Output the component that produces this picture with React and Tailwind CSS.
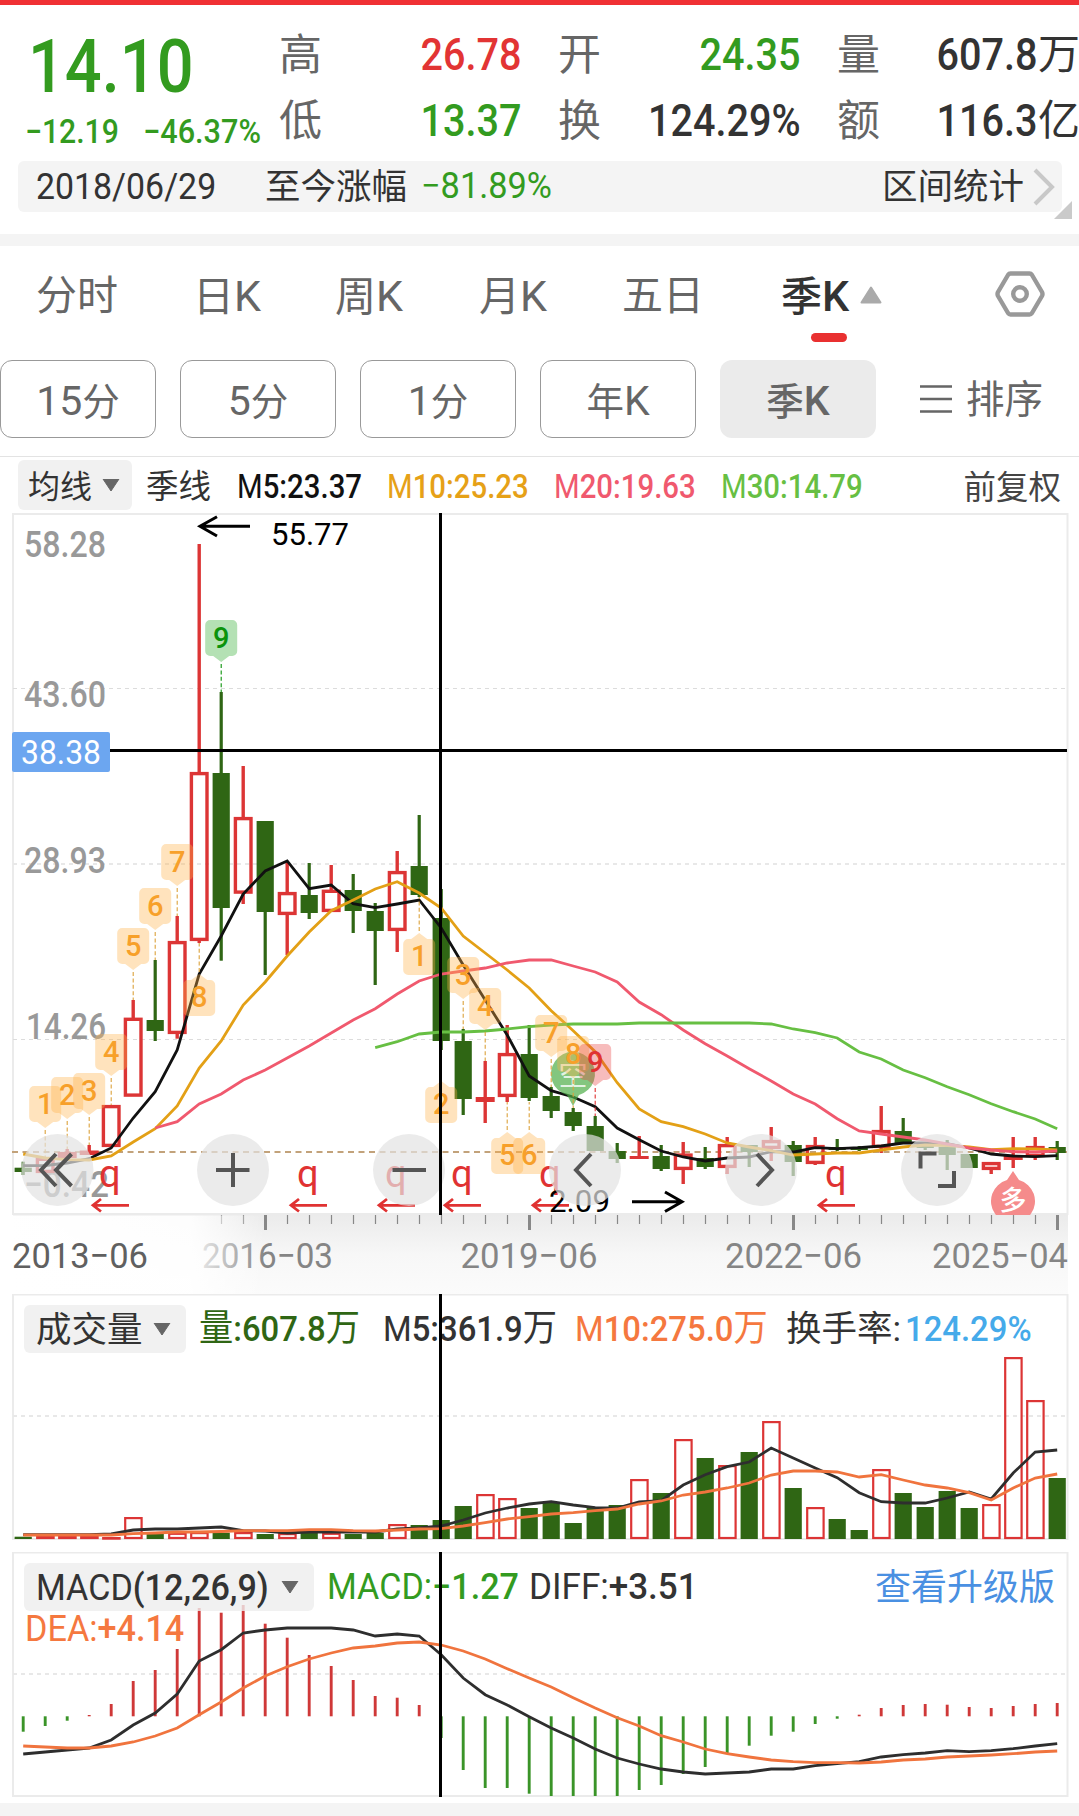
import React from 'react';

const RED = '#dc3535';
const GREEN = '#2f6614';
const STEP = 22;
const px = (i) => 23.2 + i * STEP;

// [direction, body top, body bottom, high, low]
const candles = [
    ['g', 1167.7, 1172, 1161.7, 1175],
    ['r', 1157.7, 1173, 1157.7, 1173],
    ['r', 1152, 1158, 1149, 1158],
    ['r', 1150.5, 1155, 1145, 1155],
    ['r', 1105, 1147, 1105, 1147],
    ['r', 1017.7, 1096.7, 1000, 1096.7],
    ['g', 1020, 1031, 960, 1041],
    ['r', 941, 1034, 916, 1038.7],
    ['r', 772, 941, 544, 943],
    ['g', 773, 908, 692, 960.7],
    ['r', 817, 893.7, 766, 904],
    ['g', 821, 912, 821, 975],
    ['r', 892, 915, 861.7, 955],
    ['g', 895, 913, 863, 919],
    ['r', 889.7, 912, 865, 912],
    ['g', 890, 911, 874, 933],
    ['g', 911, 931, 903, 985],
    ['r', 871, 931, 851, 952],
    ['g', 866, 895, 815, 897],
    ['g', 918, 1041, 889, 1050],
    ['g', 1041, 1099, 1029, 1115],
    ['r', 1097, 1102, 1061, 1123],
    ['r', 1053, 1097, 1025, 1102],
    ['g', 1054, 1098, 1025, 1101],
    ['g', 1096, 1111, 1087, 1118],
    ['g', 1112, 1126, 1108, 1131],
    ['g', 1126, 1151, 1116, 1151],
    ['g', 1151, 1159, 1143, 1163],
    ['r', 1156, 1159, 1136, 1159],
    ['g', 1156, 1169, 1145, 1171],
    ['r', 1153.5, 1170, 1142, 1184],
    ['g', 1158, 1167, 1147, 1169],
    ['r', 1144, 1168, 1137, 1174],
    ['g', 1145, 1152, 1145, 1167],
    ['r', 1140, 1149, 1127, 1161],
    ['g', 1145, 1162, 1141, 1176],
    ['r', 1145, 1164, 1137, 1165],
    ['g', 1147, 1150, 1139, 1151],
    ['g', 1147, 1150, 1146, 1151],
    ['r', 1130, 1148, 1106, 1153],
    ['g', 1131, 1144, 1118, 1144],
    ['g', 1144, 1148, 1144, 1150],
    ['g', 1147, 1155, 1140, 1170],
    ['g', 1154, 1168, 1154, 1168],
    ['r', 1162, 1170, 1162, 1174],
    ['r', 1155, 1160, 1137, 1168],
    ['r', 1146, 1157, 1137, 1160],
    ['g', 1147, 1153, 1141, 1160],
];

const ma5 = [1165.7, 1165.5, 1163, 1158.7, 1148, 1118, 1091.7, 1050, 974, 936, 894, 871, 861, 888.7, 885, 903.7, 907.7, 904, 900, 928, 965, 1000, 1035, 1076, 1090.7, 1097, 1106.7, 1128, 1139.7, 1151, 1157, 1161, 1158, 1157, 1151.7, 1152, 1147.7, 1148.7, 1147.7, 1146, 1143, 1143, 1143.7, 1148, 1154, 1156, 1156.7, 1155.7];
const ma10 = [1154, 1158, 1159.7, 1160, 1156, 1142, 1128.7, 1106, 1068, 1041, 1005, 982, 956, 932, 910.7, 900, 889, 881.7, 893, 908, 936, 953, 970, 988, 1010.7, 1030.7, 1051.7, 1082.7, 1109, 1121.7, 1126.7, 1134, 1143, 1147, 1150.7, 1155, 1154, 1153, 1153, 1150, 1147, 1145, 1145.7, 1147, 1149.7, 1148.7, 1149, 1150];
const ma20 = [1128, 1121.7, 1104, 1094, 1080, 1070, 1058, 1046, 1033, 1020, 1008.7, 994, 981, 974, 971, 968, 963, 960, 960, 966, 972, 982, 1002, 1014.7, 1030, 1043.7, 1056, 1068.7, 1081, 1094, 1104, 1118.7, 1131, 1134, 1137, 1140, 1144, 1148, 1150, 1151.7, 1152, 1151];
const ma30 = [1047.7, 1041.7, 1034, 1032, 1032, 1031, 1029, 1026.7, 1025, 1024, 1024, 1024, 1023, 1023, 1023, 1023, 1023, 1023, 1024, 1029, 1032.7, 1038, 1052, 1059, 1070, 1077.7, 1086.7, 1094.7, 1103.7, 1111.7, 1119, 1128.7];

const volumeTops = [1536.7, 1536, 1536, 1536, 1537, 1517, 1534, 1532.7, 1532, 1532.7, 1532, 1534, 1533, 1533, 1532.7, 1534, 1533, 1524, 1525, 1520, 1506, 1494, 1498, 1508, 1503, 1523, 1508, 1505, 1479, 1493, 1439, 1458, 1465, 1452, 1421, 1488, 1507, 1519, 1530, 1469, 1493, 1507, 1491, 1508, 1504, 1357, 1400, 1478];
const volMa5 = [1534.7, 1534.7, 1534.7, 1534.7, 1534, 1530, 1529, 1529, 1528, 1527, 1530.7, 1531, 1533, 1532, 1532, 1532, 1532, 1529, 1528, 1526, 1520, 1513, 1508, 1504, 1501.7, 1505, 1507.7, 1508, 1502, 1500.7, 1485, 1474.7, 1466.7, 1462, 1448, 1458, 1468, 1477.7, 1492.7, 1501.7, 1503, 1503, 1498, 1492, 1499, 1473, 1452, 1450];
const volMa10 = [1535, 1535, 1535, 1535, 1535, 1533.7, 1533, 1532, 1532, 1531.5, 1530.7, 1530.7, 1530.7, 1529.7, 1529.7, 1530.7, 1531, 1530, 1529, 1528.7, 1526, 1522.7, 1519, 1516.7, 1514, 1512.7, 1510.7, 1509, 1504, 1501, 1495, 1492, 1488, 1483, 1475, 1471, 1471, 1472, 1477, 1474.7, 1480, 1485, 1488, 1492.7, 1500, 1488, 1478, 1474];

const MACD_ZERO = 1716.3;
const macd = [1731.7, 1726, 1720.7, 1715, 1704, 1681, 1670, 1649, 1608, 1612.7, 1605, 1623.7, 1637.7, 1655, 1666, 1680, 1696, 1697.7, 1705, 1738, 1770, 1788, 1788, 1793.7, 1796, 1796, 1796, 1796, 1790, 1785, 1774, 1767, 1753, 1745.7, 1735.7, 1731.7, 1724, 1718.7, 1714.7, 1708, 1705, 1704, 1704.7, 1707, 1708, 1706, 1704, 1703];
const diff = [1754, 1752, 1750, 1748, 1740, 1725, 1713, 1694, 1661, 1649.7, 1633, 1630, 1628, 1628, 1628, 1630, 1636, 1634, 1636, 1654.7, 1678, 1694.7, 1705, 1716.7, 1728, 1738, 1749, 1758, 1764, 1769, 1772, 1774, 1773, 1772, 1769, 1769, 1765.7, 1763.7, 1761.7, 1757, 1754.7, 1753, 1750.7, 1751.7, 1750.7, 1748.7, 1746, 1743.7];
const dea = [1746, 1747, 1748, 1748, 1746, 1742, 1736, 1728, 1714.7, 1702, 1688, 1676, 1666.7, 1659, 1653, 1648, 1646, 1643, 1642, 1645, 1651, 1659, 1668.7, 1678, 1687, 1697.7, 1708, 1717.7, 1726, 1735.7, 1742, 1749, 1753.7, 1757, 1760, 1761.7, 1762.7, 1762.7, 1763, 1762, 1760, 1759, 1757, 1756, 1755, 1753.7, 1752, 1751];

// Countdown markers: candle index, label, pointer tip y, far end of the dashed line
const marks = [
    { i: 1, n: '1', tip: 1128, end: 1157, dir: 'down' },
    { i: 2, n: '2', tip: 1119, end: 1149, dir: 'down' },
    { i: 3, n: '3', tip: 1115, end: 1145, dir: 'down' },
    { i: 4, n: '4', tip: 1076, end: 1105, dir: 'down' },
    { i: 5, n: '5', tip: 970, end: 1000, dir: 'down' },
    { i: 6, n: '6', tip: 930, end: 960, dir: 'down' },
    { i: 7, n: '7', tip: 886, end: 916, dir: 'down' },
    { i: 8, n: '8', tip: 974, end: 943, dir: 'up' },
    { i: 9, n: '9', tip: 662, end: 692, dir: 'down', fill: '#b4e1b4', color: '#0b930b' },
    { i: 18, n: '1', tip: 933, end: 897, dir: 'up' },
    { i: 19, n: '2', tip: 1081, end: 1050, dir: 'up' },
    { i: 20, n: '3', tip: 999, end: 1029, dir: 'down' },
    { i: 21, n: '4', tip: 1030, end: 1061, dir: 'down' },
    { i: 22, n: '5', tip: 1132, end: 1102, dir: 'up' },
    { i: 23, n: '6', tip: 1132, end: 1102, dir: 'up' },
    { i: 24, n: '7', tip: 1057, end: 1087, dir: 'down' },
    { i: 25, n: '8', tip: 1078, end: 1108, dir: 'down' },
    { i: 26, n: '9', tip: 1086, end: 1116, dir: 'down', fill: 'rgba(232,60,60,0.34)', color: '#e03232' },
];

const Line = ({ data, start = 0, color }) => (
    <polyline
        points={data.map((y, k) => `${px(k + start)},${y}`).join(' ')}
        fill="none"
        stroke={color}
        strokeWidth="2.8"
    />
);

// SVG text squeezed to a fixed width
const T = ({ x, y, w, size, fill, weight = 400, children }) => (
    <text x={x} y={y} textLength={w} lengthAdjust="spacingAndGlyphs" fontSize={size} fill={fill} fontWeight={weight}>
        {children}
    </text>
);

const Candle = ({ i, d }) => {
    const [dir, top, bottom, high, low] = d;
    const x = px(i);
    if (dir === 'g') {
        return (
            <g fill={GREEN}>
                <rect x={x - 1.6} y={high} width="3.2" height={low - high} />
                <rect x={x - 8.6} y={top} width="17.2" height={bottom - top} />
            </g>
        );
    }
    return (
        <g stroke={RED} strokeWidth="3.4" fill="none">
            {high < top && <line x1={x} x2={x} y1={high} y2={top + 1} />}
            {low > bottom && <line x1={x} x2={x} y1={bottom - 1} y2={low} />}
            {bottom - top < 6
                ? <rect x={x - 9.5} y={top} width="19" height={bottom - top} fill={RED} stroke="none" />
                : <rect x={x - 7.8} y={top + 1.6} width="15.6" height={bottom - top - 3.2} />}
        </g>
    );
};

const Mark = ({ i, n, tip, end, dir, fill = 'rgba(255,178,72,0.36)', color = '#f7a02a' }) => {
    const x = px(i);
    const s = dir === 'down' ? -1 : 1;
    const edge = tip + s * 6;
    const far = tip + s * 42;
    const sweep = dir === 'down' ? 1 : 0;
    return (
        <g>
            <line x1={x} x2={x} y1={tip - s * 2} y2={end} stroke={fill.startsWith('rgba(255') ? '#dca23c' : color} strokeWidth="1.1" strokeDasharray="4 2.4" />
            <path
                d={`M${x} ${tip} L${x - 8} ${edge} H${x - 11} a5 5 0 0 ${sweep} -5 ${s * 5} V${far - s * 5} a5 5 0 0 ${sweep} 5 ${s * 5} H${x + 11} a5 5 0 0 ${sweep} 5 ${-s * 5} V${edge + s * 5} a5 5 0 0 ${sweep} -5 ${-s * 5} H${x + 8} Z`}
                fill={fill}
            />
            <text x={x} y={(edge + far) / 2 + (dir === 'down' ? 10 : 8.5)} textAnchor="middle" fontSize="29" fontWeight="500" fill={color}>{n}</text>
        </g>
    );
};

const RightsMark = ({ x }) => (
    <g>
        <text x={x + 6} y="1187" fontSize="38" fill="#e03232">q</text>
        <path d={`M${x + 36} 1205.3 H${x} M${x + 8} 1199 L${x} 1205.3 L${x + 8} 1211.5`} fill="none" stroke="#e03232" strokeWidth="2.8" />
    </g>
);

const RoundButton = ({ x, d }) => (
    <g>
        <circle cx={x} cy="1170" r="36" fill="#e3e3e3" fillOpacity="0.7" />
        <path d={d} fill="none" stroke="#555" strokeWidth="4" />
    </g>
);

const Caret = () => (
    <svg width="18" height="13" viewBox="0 0 18 13"><path d="M1 0H17L9 12Z" fill="#666" stroke="#666" strokeLinejoin="round" /></svg>
);

const Stat = ({ label, value, unit, color = 'text-[#333]' }) => (
    <div className="flex h-[66px] w-[243px] items-center justify-between">
        <span className="text-[43px] text-[#666]">{label}</span>
        <span className={`flex items-center font-medium ${color}`}>
            <span className="origin-right scale-x-[0.89] text-[44.5px]">{value}</span>
            {unit && <span className="text-[42px] font-normal">{unit}</span>}
        </span>
    </div>
);

const Tab = ({ cjk, latin, className }) => (
    <span className={`block ${className}`}>
        {cjk}
        {latin && <span className="text-[43px]">{latin}</span>}
    </span>
);

const PeriodButton = ({ active, children }) => (
    <button className={`h-[78px] w-[156px] shrink-0 rounded-xl pt-1 text-[37.5px] leading-none text-[#666] ${active ? 'bg-[#ebebeb] font-medium' : 'border border-[#999]'}`}>
        {children}
    </button>
);

// Narrow figures used in the indicator legends
const Legend = ({ className, scale = 'scale-x-[0.89]', children }) => (
    <span className={`block shrink-0 ${className}`}>
        <span className={`block w-max origin-left font-medium ${scale}`}>{children}</span>
    </span>
);

const Quote = () => (
    <header className="h-[229px]">
        <div className="flex h-[156px]">
            <div className="w-[279px] shrink-0 text-[#339b1f]">
                <div className="ml-7 mt-[22px] h-[78px] origin-left scale-x-[0.865] text-[75px] font-medium leading-[78px]">14.10</div>
                <div className="ml-[25px] mt-[7px] flex text-[33.5px] font-medium leading-[40px]">
                    <span className="w-[118px] shrink-0"><span className="block w-max origin-left scale-x-[0.9]">−12.19</span></span>
                    <span className="block w-max origin-left scale-x-[0.915]">−46.37%</span>
                </div>
            </div>
            <div className="flex gap-9 pt-[17px] leading-[66px]">
                <div>
                    <Stat label="高" value="26.78" color="text-[#e23434]" />
                    <Stat label="低" value="13.37" color="text-[#339b1f]" />
                </div>
                <div>
                    <Stat label="开" value="24.35" color="text-[#339b1f]" />
                    <Stat label="换" value="124.29%" />
                </div>
                <div>
                    <Stat label="量" value="607.8" unit="万" />
                    <Stat label="额" value="116.3" unit="亿" />
                </div>
            </div>
        </div>
        <div className="relative ml-[18px] flex h-[51px] w-[1044px] items-center rounded-md bg-[#f4f4f4] pl-[18px] text-[35.5px] text-[#333]">
            <span className="w-[229px] shrink-0"><span className="block w-max origin-left scale-x-[0.915] text-[37px]">2018/06/29</span></span>
            <span className="w-[156px] shrink-0 pt-[2px]">至今涨幅</span>
            <span className="w-max origin-left scale-x-[0.94] text-[36.5px] text-[#339b1f]">−81.89%</span>
            <span className="ml-auto mr-[8px] pt-[3px]">区间统计</span>
            <svg className="mr-[6px]" width="24" height="38" viewBox="0 0 24 38"><path d="M3 2L20 19L3 36" fill="none" stroke="#c8c8c8" strokeWidth="4" /></svg>
            <svg className="absolute -bottom-[7px] -right-[10px]" width="18" height="18"><path d="M18 0V18H0Z" fill="#cacaca" /></svg>
        </div>
    </header>
);

const Periods = () => (
    <nav className="h-[211px] border-b border-[#e3e3e3] text-[#666]">
        <div className="flex h-[114px] items-start pt-[22px] text-[41px] leading-[56px]">
            <Tab className="ml-[36px] w-[157px]" cjk="分时" />
            <Tab className="w-[142px]" cjk="日" latin="K" />
            <Tab className="w-[144px]" cjk="周" latin="K" />
            <Tab className="w-[143px]" cjk="月" latin="K" />
            <Tab className="w-[159px]" cjk="五日" />
            <div className="relative flex w-[214px] items-center text-[#333]">
                <Tab className="font-medium" cjk="季" latin="K" />
                <svg className="-mt-1 ml-[11px]" width="22" height="18"><path d="M11 1.5L20.5 16.5H1.5Z" fill="#aaa" stroke="#aaa" strokeWidth="2" strokeLinejoin="round" /></svg>
                <span className="absolute left-[30px] top-[65px] h-[9px] w-9 rounded-full bg-[#e93030]" />
            </div>
            <svg className="mt-[3px]" width="50" height="46" viewBox="0 0 50 46" fill="none" stroke="#999" strokeLinejoin="round">
                <path d="M15.5 2.5H34.5Q36 2.5 37 4L47 21Q48 23 47 25L37 42Q36 43.5 34.5 43.5H15.5Q14 43.5 13 42L3 25Q2 23 3 21L13 4Q14 2.5 15.5 2.5Z" strokeWidth="4.4" />
                <circle cx="25" cy="23" r="6.8" strokeWidth="4.4" />
            </svg>
        </div>
        <div className="flex items-center gap-6">
            <PeriodButton><span className="text-[41px]">15</span>分</PeriodButton>
            <PeriodButton><span className="text-[41px]">5</span>分</PeriodButton>
            <PeriodButton><span className="text-[41px]">1</span>分</PeriodButton>
            <PeriodButton>年<span className="text-[41px]">K</span></PeriodButton>
            <PeriodButton active>季<span className="text-[41px]">K</span></PeriodButton>
            <div className="ml-5 flex items-center gap-[14px] text-[38.5px] leading-none">
                <svg width="32" height="28" stroke="#666" strokeWidth="2.6"><path d="M0 1.5H32M0 14H32M0 26.5H32" /></svg>
                <span className="pt-[3px]">排序</span>
            </div>
        </div>
    </nav>
);

const AverageLegend = () => (
    <div className="flex h-14 items-start pl-[18px] pt-[3px] text-[33px] leading-[50px]">
        <div className="flex h-[50px] w-[114px] shrink-0 items-center gap-[10px] rounded-md bg-[#f1f1f1] pl-[10px] text-[32px] text-[#333]"><span className="pt-[3px]">均线</span><Caret /></div>
        <span className="ml-[14px] w-[91px] shrink-0 pt-[2px] text-[32.5px] text-[#333]">季线</span>
        <Legend className="w-[150px] pt-[2px] text-[#111]"><span className="font-normal">M</span>5:23.37</Legend>
        <Legend className="w-[167px] pt-[2px] text-[#e6a117]"><span className="font-normal">M</span>10:25.23</Legend>
        <Legend className="w-[167px] pt-[2px] text-[#f0596e]"><span className="font-normal">M</span>20:19.63</Legend>
        <Legend className="w-[150px] pt-[2px] text-[#67bf43]"><span className="font-normal">M</span>30:14.79</Legend>
        <span className="ml-auto mr-[18px] pt-[3px] text-[32.5px] text-[#444]">前复权</span>
    </div>
);

const ticks = Array.from({ length: 39 }, (_, k) => k + 9);

const PriceChart = () => (
    <svg className="block" width="1079" height="781" viewBox="0 513 1079 781">
        <defs>
            <linearGradient id="axisShade" x1="0" y1="0" x2="0" y2="1">
                <stop offset="0" stopColor="#ebebeb" />
                <stop offset="0.5" stopColor="#f7f7f7" />
                <stop offset="1" stopColor="#fbfbfb" />
            </linearGradient>
            <linearGradient id="axisFade" x1="0" y1="0" x2="1" y2="0">
                <stop offset="0" stopColor="#fff" />
                <stop offset="0.72" stopColor="#fff" stopOpacity="0.9" />
                <stop offset="0.85" stopColor="#fff" stopOpacity="0.5" />
                <stop offset="1" stopColor="#fff" stopOpacity="0" />
            </linearGradient>
            <clipPath id="priceArea"><rect x="12" y="513" width="1056" height="702" /></clipPath>
        </defs>

        <rect x="13" y="1215" width="1055" height="79" fill="url(#axisShade)" />
        <rect x="13" y="514" width="1054.5" height="700" fill="#fff" stroke="#ebebeb" strokeWidth="2" />
        <g stroke="#dcdcdc" strokeWidth="1.2" strokeDasharray="4 4">
            <path d="M13 688.5H1067M13 1039.5H1067" />
            <path d="M13 864H1067" stroke="#e8e8e8" strokeWidth="2" />
        </g>
        <path d="M12 1152H1067" stroke="#c2a27a" strokeWidth="1.8" strokeDasharray="6 4.5" />

        <g fill="#999">
            <T x="24" y="556.5" w="82" size="36.5" weight="500">58.28</T>
            <T x="24" y="706.5" w="82" size="36.5" weight="500">43.60</T>
            <T x="24" y="872.5" w="82" size="36.5" weight="500">28.93</T>
            <T x="26" y="1039" w="80" size="36.5" weight="500">14.26</T>
            <T x="24" y="1197" w="85" size="36.5" weight="500">−0.42</T>
        </g>

        <g clipPath="url(#priceArea)">
            {candles.map((d, i) => <Candle key={i} i={i} d={d} />)}
            <Line data={ma5} color="#111" />
            <Line data={ma10} color="#e3a016" />
            <Line data={ma20} start={6} color="#f0596e" />
            <Line data={ma30} start={16} color="#67bf43" />

            <g>
                <path d="M573 1106L567 1095A22 22 0 1 1 579 1095Z" fill="#4fae49" fillOpacity="0.7" />
                <text x="573" y="1086" textAnchor="middle" fontSize="29" fill="#fff" fillOpacity="0.8">空</text>
                <path d="M1013 1171L1007 1180A22 22 0 1 0 1019 1180Z" fill="#f58b8b" />
                <text x="1013" y="1210" textAnchor="middle" fontSize="27" fill="#fff" fontWeight="500">多</text>
            </g>
            {marks.map((m) => <Mark key={m.i} {...m} />)}
            {[93, 291, 379, 445, 533, 819].map((x) => <RightsMark key={x} x={x} />)}

            <g fill="none" stroke="#000" strokeWidth="3">
                <path d="M250 526.3H200M217 516.8L200 526.3L217 536" />
                <path d="M632 1201.7H682M665 1192L682 1201.7L665 1211.5" />
            </g>
            <T x="271" y="545" w="78" size="31" fill="#000">55.77</T>
            <T x="549" y="1212" w="61" size="31" fill="#000">2.09</T>
        </g>

        <RoundButton x="57.5" d="M56 1154L41 1170L56 1186M71.5 1154L56 1170L71.5 1186" />
        <RoundButton x="233" d="M216 1170H249.5M233 1153V1187" />
        <RoundButton x="409" d="M392.5 1170H426" />
        <RoundButton x="585" d="M591 1154L576 1170L591 1186" />
        <RoundButton x="761" d="M757 1154L772 1170L757 1186" />
        <RoundButton x="937" d="M920.5 1168.5V1153.5H936.5M938 1186H954V1171" />

        <path d="M110 750.5H1067" stroke="#000" strokeWidth="3.2" />
        <path d="M440.5 513V1215" stroke="#000" strokeWidth="3" />
        <rect x="12" y="732" width="98" height="40" rx="2" fill="#6ca6f0" />
        <T x="21" y="764" w="80" size="33" fill="#fff">38.38</T>

        {ticks.map((i) => {
            const major = (i - 11) % 12 === 0;
            return <line key={i} x1={px(i) + 0.3} x2={px(i) + 0.3} y1="1215" y2={major ? 1230 : 1224} stroke="#888" strokeWidth={major ? 3 : 1.2} />;
        })}
        <g fill="#858585">
            <T x="202" y="1268" w="131" size="35.5">2016−03</T>
            <T x="460.5" y="1268" w="137" size="35.5">2019−06</T>
            <T x="725" y="1268" w="137" size="35.5">2022−06</T>
            <T x="932" y="1268" w="136" size="35.5">2025−04</T>
        </g>
        <rect x="0" y="1215.5" width="265" height="78.5" fill="url(#axisFade)" />
        <T x="12" y="1268" w="136" size="35.5" fill="#606060">2013−06</T>
    </svg>
);

const VolumeChart = () => (
    <section className="relative h-[258px]">
        <svg className="absolute inset-0" width="1079" height="258" viewBox="0 1294 1079 258">
            <rect x="13" y="1294.5" width="1054.5" height="244.5" fill="none" stroke="#ebebeb" strokeWidth="2" />
            <path d="M13 1416H1067" stroke="#e8e8e8" strokeWidth="2" strokeDasharray="4 4" />
            {volumeTops.map((top, i) => (
                candles[i][0] === 'g'
                    ? <rect key={i} x={px(i) - 8.6} y={top} width="17.2" height={1539 - top} fill={GREEN} />
                    : <rect key={i} x={px(i) - 8} y={top + 1.1} width="16.4" height={Math.max(1538 - top - 1.1, 0.5)} fill="none" stroke={RED} strokeWidth="2.2" />
            ))}
            <Line data={volMa5} color="#2e2e2e" />
            <Line data={volMa10} color="#f0743e" />
        </svg>
        <div className="relative flex items-start pl-6 pt-[11px] text-[35.5px] leading-[48px]">
            <div className="flex h-12 w-[162px] shrink-0 items-center gap-[10px] rounded-md bg-[#f1f1f1] pl-3 text-[#333]"><span className="pt-[2px]">成交量</span><Caret /></div>
            <Legend scale="scale-x-[0.925]" className="ml-[13px] w-[184px] text-[#2f6614]"><span className="text-[37px] font-normal">量</span>:607.8<span className="text-[37px] font-normal">万</span></Legend>
            <Legend scale="scale-x-[0.925]" className="w-[192px] text-[#333]"><span className="font-normal">M</span>5:361.9<span className="text-[37px] font-normal">万</span></Legend>
            <Legend scale="scale-x-[0.925]" className="w-[211px] text-[#f5783f]"><span className="font-normal">M</span>10:275.0<span className="text-[37px] font-normal">万</span></Legend>
            <span className="w-[119px] shrink-0 text-[#333]">换手率:</span>
            <Legend scale="scale-x-[0.925]" className="text-[#45aaea]">124.29%</Legend>
        </div>
        <span className="absolute left-[439px] top-0 h-[245px] w-[3px] bg-black" />
    </section>
);

const MacdChart = () => (
    <section className="relative h-[251px]">
        <svg className="absolute inset-0" width="1079" height="251" viewBox="0 1552 1079 251">
            <rect x="13" y="1552.5" width="1054.5" height="243.5" fill="none" stroke="#ebebeb" strokeWidth="2" />
            <path d="M13 1674H1067" stroke="#e8e8e8" strokeWidth="2" strokeDasharray="4 4" />
            {macd.map((y, i) => (
                <line key={i} x1={px(i)} x2={px(i)} y1={MACD_ZERO} y2={y} stroke={y < MACD_ZERO ? '#cf3838' : '#3a9428'} strokeWidth="2.9" />
            ))}
            <Line data={diff} color="#2e2e2e" />
            <Line data={dea} color="#f0743e" />
        </svg>
        <div className="relative flex items-start pl-6 pt-[11px] text-[36.5px] leading-[48px]">
            <div className="flex h-12 w-[290px] shrink-0 items-center rounded-md bg-[#eee]/80 pl-3 text-[#333]">
                <Legend scale="scale-x-[0.935]" className="w-[245px] pt-[2px]"><span className="font-normal">MACD</span>(12,26,9)</Legend>
                <Caret />
            </div>
            <Legend scale="scale-x-[0.935]" className="ml-[13px] w-[202px] text-[#339b1f]"><span className="font-normal">MACD:</span>−1.27</Legend>
            <Legend scale="scale-x-[0.96]" className="text-[#333]"><span className="font-normal">DIFF:</span>+3.51</Legend>
            <span className="ml-auto mr-[24px] pt-[1px] text-[36px] text-[#4a90e2]">查看升级版</span>
        </div>
        <div className="relative pl-[25px] text-[36px] leading-[34px]">
            <Legend scale="scale-x-[0.95]" className="text-[#f5783f]"><span className="font-normal">DEA:</span>+4.14</Legend>
        </div>
        <span className="absolute left-[439px] top-0 h-[245px] w-[3px] bg-black" />
    </section>
);

export default function App() {
    return (
        <div className="h-[1816px] w-[1079px] overflow-hidden whitespace-nowrap bg-white font-['Roboto','Noto_Sans_CJK_SC',sans-serif]">
            <div className="h-[5px] bg-[#f03034]" />
            <Quote />
            <div className="h-3 bg-[#f4f4f4]" />
            <Periods />
            <AverageLegend />
            <PriceChart />
            <VolumeChart />
            <MacdChart />
            <div className="h-[14px] bg-[#f4f4f4]" />
        </div>
    );
}
